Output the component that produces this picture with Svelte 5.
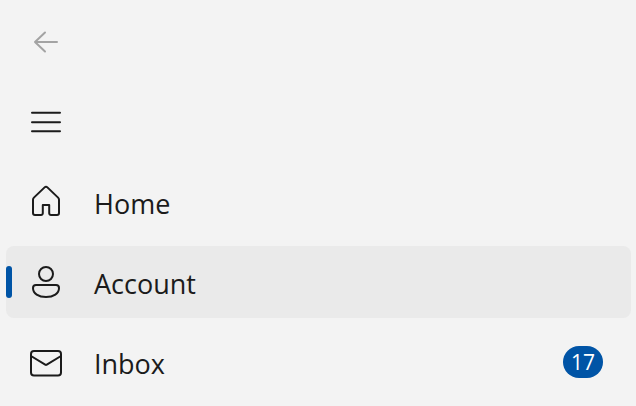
<script>
  let selected = $state('Account');
  const items = [
    { label: 'Home', icon: 'home' },
    { label: 'Account', icon: 'account' },
    { label: 'Inbox', icon: 'inbox', count: 17 }
  ];
</script>

<nav class="pane" aria-label="Main">
  <button class="tool" type="button" aria-label="Back" disabled>
    <svg class="icon" viewBox="0 0 32 32" aria-hidden="true">
      <path d="M27 16H5M15 6.5 5 16l10 9.5" />
    </svg>
  </button>
  <button class="tool" type="button" aria-label="Toggle navigation">
    <svg class="icon" viewBox="0 0 32 32" aria-hidden="true">
      <path d="M2 6.8h28M2 16.2h28M2 25.2h28" />
    </svg>
  </button>

  {#each items as item (item.label)}
    <button
      class="item"
      class:selected={selected === item.label}
      type="button"
      aria-current={selected === item.label ? 'page' : undefined}
      onclick={() => (selected = item.label)}
    >
      <svg class="icon" viewBox="0 0 32 32" aria-hidden="true">
        {#if item.icon === 'home'}
          <path d="M14.6 1.4a2 2 0 0 1 2.8 0L28.1 11.6a3 3 0 0 1 .9 2.1V27a2 2 0 0 1-2 2h-6a1.8 1.8 0 0 1-1.8-1.8V19h-6.4v8.2A1.8 1.8 0 0 1 11 29H5a2 2 0 0 1-2-2V13.7a3 3 0 0 1 .9-2.1z" />
        {:else if item.icon === 'account'}
          <circle cx="16" cy="8" r="7" />
          <path d="M6 19h20a3 3 0 0 1 3 3c0 5.5-5.5 9-13 9S3 27.5 3 22a3 3 0 0 1 3-3z" />
        {:else}
          <rect x="1" y="5" width="30" height="24.5" rx="3" />
          <path d="m1 10 14.2 8.7q.8.5 1.6 0L31 10" />
        {/if}
      </svg>
      <span class="label">{item.label}</span>
      {#if item.count}
        <span class="badge">{item.count}</span>
      {/if}
    </button>
  {/each}
</nav>

<style>
  :global(body) {
    background: #f3f3f3;
  }

  .pane {
    display: flex;
    flex-direction: column;
    gap: 8px;
    padding: 6px 5px 8px 6px;
    font-family: 'Segoe UI', 'Open Sans', 'Noto Sans', sans-serif;
    color: #1b1b1b;
  }

  button {
    box-sizing: border-box;
    display: flex;
    align-items: center;
    height: 72px;
    margin: 0;
    padding: 0 28px 0 24px;
    border: 0;
    border-radius: 8px;
    background: transparent;
    color: inherit;
    font: inherit;
    text-align: left;
  }

  .tool {
    align-self: flex-start;
    padding-right: 24px;
  }

  .tool:disabled {
    color: #a3a3a3;
  }

  .item {
    position: relative;
    gap: 32px;
    font-size: 27px;
    line-height: 40px;
  }

  .selected {
    background: #eaeaea;
  }

  .selected::before {
    content: '';
    position: absolute;
    left: 0;
    top: 20px;
    width: 6px;
    height: 32px;
    border-radius: 3px;
    background: #0054a6;
  }

  .icon {
    flex: none;
    width: 32px;
    height: 32px;
    overflow: visible;
    fill: none;
    stroke: currentColor;
    stroke-width: 2;
    stroke-linecap: round;
    stroke-linejoin: round;
  }

  .label {
    flex: 1;
    padding-top: 4px;
  }

  .badge {
    box-sizing: border-box;
    min-width: 40px;
    height: 32px;
    padding: 0 6px;
    border-radius: 16px;
    background: #0054a6;
    color: #fff;
    font-size: 21px;
    line-height: 32px;
    text-align: center;
  }
</style>
